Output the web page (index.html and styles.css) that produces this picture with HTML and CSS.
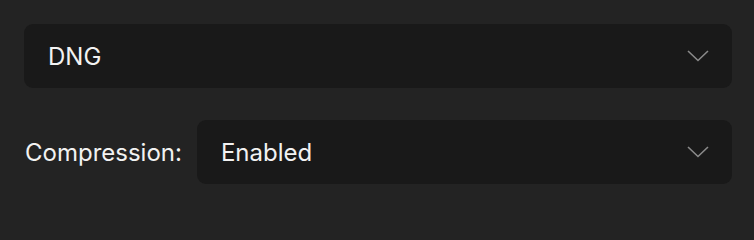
FILE: index.html
```html
<!DOCTYPE html>
<html lang="en">
<head>
<meta charset="utf-8">
<title>Export settings</title>
<link rel="stylesheet" href="styles.css">
</head>
<body>
<div class="panel">
  <div class="select select-full">
    <span class="value">DNG</span>
    <svg class="chev" width="22" height="12" viewBox="0 0 22 12"><path d="M1 1 L11 10.5 L21 1" fill="none" stroke="#8a8a8a" stroke-width="1.6"/></svg>
  </div>
  <div class="row">
    <span class="label">Compression:</span>
    <div class="select select-grow">
      <span class="value">Enabled</span>
      <svg class="chev" width="22" height="12" viewBox="0 0 22 12"><path d="M1 1 L11 10.5 L21 1" fill="none" stroke="#8a8a8a" stroke-width="1.6"/></svg>
    </div>
  </div>
</div>
</body>
</html>
```
FILE: styles.css
```css
html, body {
  margin: 0;
  padding: 0;
  background: #232323;
  width: 754px;
  height: 232px;
  overflow: hidden;
}
.panel {
  padding: 24px 22px 0 24px;
  display: flex;
  flex-direction: column;
  gap: 32px;
  font-family: Inter, "Noto Sans", sans-serif;
  color: #f2f2f2;
}
.select {
  background: #191919;
  border-radius: 9px;
  height: 64px;
  display: flex;
  align-items: center;
  justify-content: space-between;
  padding: 0 23px 0 24px;
  box-sizing: border-box;
}
.value {
  font-size: 24px;
}
.chev {
  display: block;
}
.row {
  display: flex;
  align-items: center;
  gap: 15px;
}
.label {
  font-size: 24px;
  padding-left: 1px;
}
.select-grow {
  flex: 1;
}
```
